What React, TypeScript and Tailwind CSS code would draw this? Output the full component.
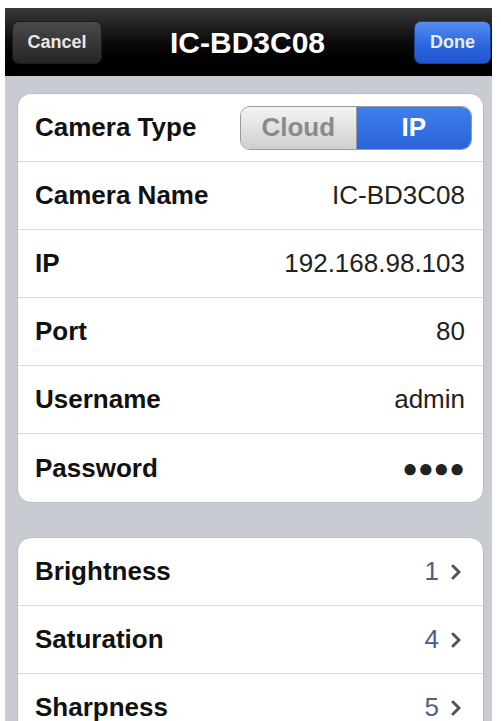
import React from 'react';

const font = { fontFamily: '"Liberation Sans", Arial, sans-serif' };

function Row({ label, value, last, children }: { label: string; value?: string; last?: boolean; children?: React.ReactNode }) {
  return (
    <div className={`h-[68px] shrink-0 flex items-center justify-between pl-[17px] pr-[18px] ${last ? '' : 'border-b border-[#d9d9d9]'}`}>
      <span className="text-[26px] font-bold text-[#111]">{label}</span>
      {children ?? <span className="text-[26px] text-[#222]">{value}</span>}
    </div>
  );
}

function NavRow({ label, value, last }: { label: string; value: string; last?: boolean }) {
  return (
    <div className={`h-[68px] shrink-0 flex items-center justify-between pl-[17px] pr-[22px] ${last ? '' : 'border-b border-[#d9d9d9]'}`}>
      <span className="text-[26px] font-bold text-[#111]">{label}</span>
      <span className="flex items-center gap-[12px]">
        <span className="text-[26px] text-[#4f5b88]">{value}</span>
        <svg width="10" height="16" viewBox="0 0 10 16">
          <path d="M2 2 L8 8 L2 14" fill="none" stroke="#555" strokeWidth="3" strokeLinecap="round" strokeLinejoin="round" />
        </svg>
      </span>
    </div>
  );
}

export default function App() {
  return (
    <div className="w-[501px] h-[721px] bg-white pt-[8px] pl-[5px] overflow-hidden" style={font}>
      <div className="w-[487px] h-[713px] bg-[#c8cbd2] flex flex-col overflow-hidden">
        {/* Nav bar */}
        <header className="h-[68px] shrink-0 bg-gradient-to-b from-[#3a3a3a] via-[#0c0c0c] to-black flex items-center justify-between pl-[7px] pr-[1px] relative">
          <button className="w-[90px] h-[43px] rounded-[7px] bg-gradient-to-b from-[#4a4a4a] to-[#262626] border border-[#1a1a1a] text-[#e8e8e8] text-[18px] font-bold">
            Cancel
          </button>
          <span className="absolute left-[165px] top-0 bottom-0 flex items-center text-[30px] font-bold text-white">IC-BD3C08</span>
          <button className="w-[77px] h-[43px] rounded-[7px] bg-gradient-to-b from-[#5a8cf0] via-[#2f6ae0] to-[#1f55cc] border border-[#1a3f90] text-[#e8eeff] text-[18px] font-bold">
            Done
          </button>
        </header>

        {/* Camera settings */}
        <div className="shrink-0 mt-[17px] ml-[12px] w-[467px] bg-white rounded-[14px] border border-[#b8bcc4]">
          <Row label="Camera Type">
            <div className="flex w-[232px] h-[44px] rounded-[10px] overflow-hidden border border-[#9a9a9a] -mr-[7px]">
              <div className="flex-1 flex items-center justify-center bg-gradient-to-b from-[#f4f4f4] to-[#cfcfcf] text-[26px] font-bold text-[#8a8a8a] border-r border-[#9a9a9a]">
                Cloud
              </div>
              <div className="flex-1 flex items-center justify-center bg-gradient-to-b from-[#3d7fee] to-[#2a63d8] text-[26px] font-bold text-white">
                IP
              </div>
            </div>
          </Row>
          <Row label="Camera Name" value="IC-BD3C08" />
          <Row label="IP" value="192.168.98.103" />
          <Row label="Port" value="80" />
          <Row label="Username" value="admin" />
          <Row label="Password" value="●●●●" last />
        </div>

        {/* Image settings */}
        <div className="shrink-0 mt-[34px] ml-[12px] w-[467px] bg-white rounded-t-[14px] border border-[#b8bcc4]">
          <NavRow label="Brightness" value="1" />
          <NavRow label="Saturation" value="4" />
          <NavRow label="Sharpness" value="5" />
        </div>
      </div>
    </div>
  );
}
